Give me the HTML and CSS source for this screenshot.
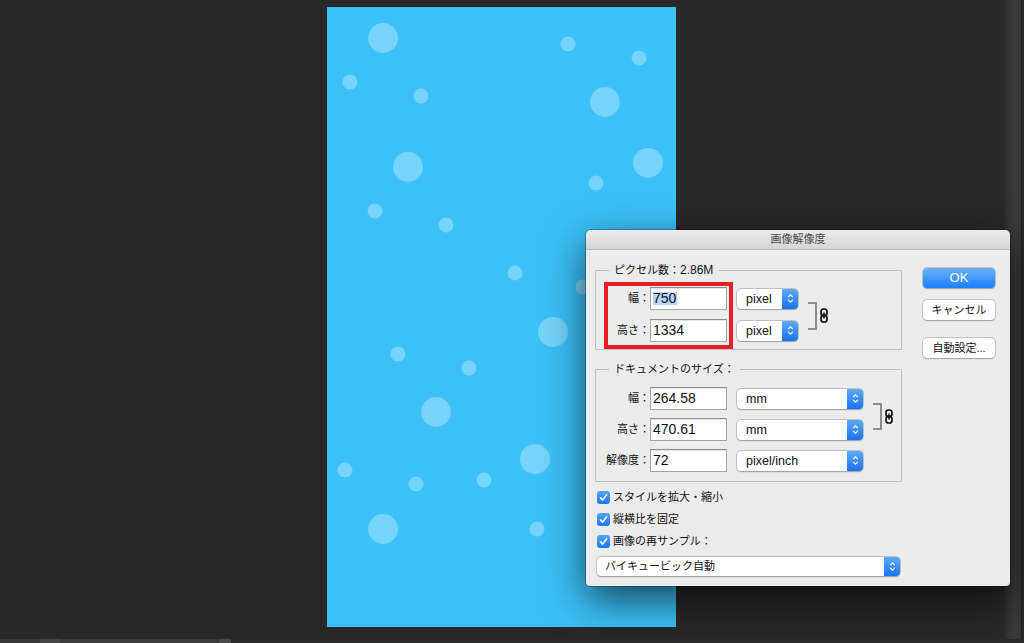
FILE: index.html
```html
<!DOCTYPE html>
<html lang="ja">
<head>
<meta charset="utf-8">
<title>画像解像度</title>
<link rel="stylesheet" href="styles.css">
</head>
<body>
<div class="app">
  <div class="main">
    <div class="workspace">
      <svg class="artboard" width="349" height="620" viewBox="327 7 349 620">
        <rect x="327" y="7" width="349" height="620" fill="#3bc1f7"/>
        <g fill="#ffffff" fill-opacity="0.3">
          <circle cx="383" cy="38" r="15"/>
          <circle cx="605" cy="102" r="15"/>
          <circle cx="408" cy="167" r="15"/>
          <circle cx="648" cy="163" r="15"/>
          <circle cx="553" cy="332" r="15"/>
          <circle cx="436" cy="412" r="15"/>
          <circle cx="535" cy="459" r="15"/>
          <circle cx="383" cy="529" r="15"/>
          <circle cx="350" cy="82" r="7.5"/>
          <circle cx="421" cy="96" r="7.5"/>
          <circle cx="568" cy="44" r="7.5"/>
          <circle cx="639" cy="58" r="7.5"/>
          <circle cx="596" cy="183" r="7.5"/>
          <circle cx="375" cy="211" r="7.5"/>
          <circle cx="446" cy="225" r="7.5"/>
          <circle cx="515" cy="273" r="7.5"/>
          <circle cx="583" cy="287" r="7.5"/>
          <circle cx="398" cy="354" r="7.5"/>
          <circle cx="469" cy="368" r="7.5"/>
          <circle cx="345" cy="470" r="7.5"/>
          <circle cx="416" cy="484" r="7.5"/>
          <circle cx="484" cy="480" r="7.5"/>
          <circle cx="537" cy="529" r="7.5"/>
        </g>
      </svg>
    </div>
    <div class="sidebar"></div>
  </div>
  <div class="statusbar">
    <div class="seg seg-a"></div>
    <div class="seg seg-b"></div>
    <div class="seg seg-c"></div>
    <div class="seg seg-d"></div>
    <div class="seg seg-e"></div>
  </div>

  <div class="dialog">
    <div class="titlebar">画像解像度</div>
    <div class="dlg-body">
      <div class="dlg-main">
        <div class="group">
          <div class="group-title">ピクセル数：<span class="latin">2.86M</span></div>
          <div class="px-body">
            <div class="highlight">
              <div class="field"><span class="lbl">幅：</span><div class="input"><span class="sel">750</span></div></div>
              <div class="field"><span class="lbl">高さ：</span><div class="input">1334</div></div>
            </div>
            <div class="unit-col">
              <div class="unit-row">
                <div class="select s1"><span class="select-text">pixel</span><span class="select-arrow"><svg width="7" height="11" viewBox="0 0 7 11"><path d="M1.2 4.2 L3.5 1.8 L5.8 4.2 M1.2 6.8 L3.5 9.2 L5.8 6.8" fill="none" stroke="#fff" stroke-width="1.2"/></svg></span></div>
              </div>
              <div class="unit-row">
                <div class="select s1"><span class="select-text">pixel</span><span class="select-arrow"><svg width="7" height="11" viewBox="0 0 7 11"><path d="M1.2 4.2 L3.5 1.8 L5.8 4.2 M1.2 6.8 L3.5 9.2 L5.8 6.8" fill="none" stroke="#fff" stroke-width="1.2"/></svg></span></div>
              </div>
            </div>
            <div class="link">
              <div class="bracket"></div>
              <svg class="chain" width="8" height="15" viewBox="0 0 8 15"><rect x="1" y="1" width="6" height="6.6" rx="2.6" fill="none" stroke="#111" stroke-width="1.7"/><rect x="1" y="7.4" width="6" height="6.6" rx="2.6" fill="none" stroke="#111" stroke-width="1.7"/><path d="M4 4.6 V10.4" stroke="#111" stroke-width="1.6"/></svg>
            </div>
          </div>
        </div>

        <div class="group group-doc">
          <div class="group-title">ドキュメントのサイズ：</div>
          <div class="doc-grid">
            <span class="lbl lbl-doc">幅：</span>
            <div class="input">264.58</div>
            <div class="select s2"><span class="select-text">mm</span><span class="select-arrow"><svg width="7" height="11" viewBox="0 0 7 11"><path d="M1.2 4.2 L3.5 1.8 L5.8 4.2 M1.2 6.8 L3.5 9.2 L5.8 6.8" fill="none" stroke="#fff" stroke-width="1.2"/></svg></span></div>
            <div class="link link-doc">
              <div class="bracket bracket-doc"></div>
              <svg class="chain" width="8" height="15" viewBox="0 0 8 15"><rect x="1" y="1" width="6" height="6.6" rx="2.6" fill="none" stroke="#111" stroke-width="1.7"/><rect x="1" y="7.4" width="6" height="6.6" rx="2.6" fill="none" stroke="#111" stroke-width="1.7"/><path d="M4 4.6 V10.4" stroke="#111" stroke-width="1.6"/></svg>
            </div>
            <span class="lbl lbl-doc">高さ：</span>
            <div class="input">470.61</div>
            <div class="select s2"><span class="select-text">mm</span><span class="select-arrow"><svg width="7" height="11" viewBox="0 0 7 11"><path d="M1.2 4.2 L3.5 1.8 L5.8 4.2 M1.2 6.8 L3.5 9.2 L5.8 6.8" fill="none" stroke="#fff" stroke-width="1.2"/></svg></span></div>
            <span class="lbl lbl-doc">解像度：</span>
            <div class="input">72</div>
            <div class="select s2"><span class="select-text">pixel/inch</span><span class="select-arrow"><svg width="7" height="11" viewBox="0 0 7 11"><path d="M1.2 4.2 L3.5 1.8 L5.8 4.2 M1.2 6.8 L3.5 9.2 L5.8 6.8" fill="none" stroke="#fff" stroke-width="1.2"/></svg></span></div>
          </div>
        </div>

        <div class="checks">
          <div class="check"><span class="cb"><svg width="13" height="13" viewBox="0 0 13 13"><path d="M3.4 6.8 L5.6 9.1 L9.7 3.8" fill="none" stroke="#fff" stroke-width="1.6" stroke-linecap="round" stroke-linejoin="round"/></svg></span><span>スタイルを拡大・縮小</span></div>
          <div class="check"><span class="cb"><svg width="13" height="13" viewBox="0 0 13 13"><path d="M3.4 6.8 L5.6 9.1 L9.7 3.8" fill="none" stroke="#fff" stroke-width="1.6" stroke-linecap="round" stroke-linejoin="round"/></svg></span><span>縦横比を固定</span></div>
          <div class="check"><span class="cb"><svg width="13" height="13" viewBox="0 0 13 13"><path d="M3.4 6.8 L5.6 9.1 L9.7 3.8" fill="none" stroke="#fff" stroke-width="1.6" stroke-linecap="round" stroke-linejoin="round"/></svg></span><span>画像の再サンプル：</span></div>
        </div>

        <div class="select sw"><span class="select-text jp">バイキュービック自動</span><span class="select-arrow"><svg width="7" height="11" viewBox="0 0 7 11"><path d="M1.2 4.2 L3.5 1.8 L5.8 4.2 M1.2 6.8 L3.5 9.2 L5.8 6.8" fill="none" stroke="#fff" stroke-width="1.2"/></svg></span></div>
      </div>

      <div class="dlg-buttons">
        <div class="btn btn-ok">OK</div>
        <div class="btn btn-cancel">キャンセル</div>
        <div class="btn btn-auto">自動設定...</div>
      </div>
    </div>
  </div>
</div>
</body>
</html>
```

FILE: styles.css
```css
* { box-sizing: border-box; }
html, body { margin: 0; padding: 0; }
body {
  background: #282828;
  font-family: "Liberation Sans", "Noto Sans CJK JP", sans-serif;
  width: 1024px;
  height: 643px;
  overflow: hidden;
}
.app {
  position: relative;
  width: 1024px;
  height: 643px;
  display: flex;
  flex-direction: column;
}
.main {
  display: flex;
  height: 639px;
}
.workspace {
  flex: 1;
  padding: 7px 0 0 327px;
}
.artboard { display: block; }
.sidebar {
  width: 20px;
  background: linear-gradient(to right, #2c2c2c 0, #353535 5px, #3a3a3a 11px, #363636 17px, #1f1f1f 17px, #1f1f1f 18px, #2b2b2b 18px);
}
.statusbar {
  height: 4px;
  display: flex;
}
.seg { height: 100%; }
.seg-a { width: 40px; background: #373737; }
.seg-b { width: 20px; background: #444444; }
.seg-c { width: 159px; background: #3b3b3b; }
.seg-d { width: 12px; background: #4a4a4a; }
.seg-e { flex: 1; background: #2b2b2b; }

/* dialog */
.dialog {
  position: absolute;
  left: 586px;
  top: 230px;
  width: 424px;
  height: 356px;
  background: #ececec;
  border-radius: 5px 5px 4px 4px;
  box-shadow: 0 0 0 1px rgba(0,0,0,0.25), 0 14px 40px rgba(0,0,0,0.65);
  overflow: hidden;
  color: #111;
  font-size: 11px;
}
.titlebar {
  height: 20px;
  text-align: center;
  font-size: 11px;
  line-height: 19px;
  color: #4a4a4a;
  background: linear-gradient(#ededed, #d5d5d5);
  border-bottom: 1px solid #b8b8b8;
}
.dlg-body {
  display: flex;
  padding: 0 15px 0 9px;
}
.dlg-main {
  width: 307px;
  padding-top: 20px;
}
.group {
  border: 1px solid #c0c0c0;
  border-radius: 1px;
}
.group-doc { margin-top: 19px; }
.group-title {
  width: fit-content;
  margin: -8px 0 0 13px;
  padding: 0 5px;
  background: #ececec;
  line-height: 15px;
  font-size: 11px;
  color: #111;
  white-space: nowrap;
}
.latin { font-size: 12px; }

.px-body {
  display: flex;
  align-items: flex-start;
  padding: 4px 0 0 8px;
}
.highlight {
  border: 4px solid #ea1d25;
  padding: 1px 2px 3px 0;
  display: flex;
  flex-direction: column;
  gap: 9px;
}
.field {
  display: flex;
  align-items: center;
  height: 23px;
}
.lbl {
  width: 42px;
  text-align: right;
  font-size: 11px;
  line-height: 23px;
  white-space: nowrap;
  color: #111;
}
.lbl-doc { width: 54px; grid-column: 1; }
.input {
  width: 77px;
  height: 23px;
  background: #fff;
  border: 1px solid #a4a4a4;
  border-top-color: #8f8f8f;
  box-shadow: inset 0 1px 0 #e4e4e4;
  padding-left: 2px;
  font-size: 14px;
  line-height: 21px;
  color: #111;
  white-space: nowrap;
}
.sel {
  display: inline-block;
  background: #b3d7ff;
  line-height: 13px;
  padding: 0 1px 0 0;
  vertical-align: middle;
  margin-top: -2px;
}
.unit-col {
  margin-left: 4px;
  padding-top: 5px;
  display: flex;
  flex-direction: column;
  gap: 9px;
}
.unit-row {
  height: 23px;
  display: flex;
  align-items: center;
}
.select {
  height: 20px;
  display: flex;
  background: #fff;
  border-radius: 4px;
  box-shadow: 0 0 0 0.5px rgba(0,0,0,0.3), 0 0.5px 1.5px rgba(0,0,0,0.22);
}
.s1 { width: 61px; }
.s2 { width: 126px; margin-left: 10px; align-self: center; }
.sw { width: 303px; height: 19px; margin: 9px 0 0 2px; }
.select-text {
  flex: 1;
  padding-left: 9px;
  font-size: 12.5px;
  line-height: 20px;
  color: #111;
  white-space: nowrap;
}
.sw .select-text {
  padding-left: 8px;
  font-size: 11px;
  line-height: 19px;
}
.select-arrow {
  width: 16px;
  border-radius: 0 4px 4px 0;
  background: linear-gradient(#5eabfd, #1b72f2);
  display: flex;
  align-items: center;
  justify-content: center;
}
.select-arrow svg { display: block; }

.link {
  display: flex;
  align-items: center;
  gap: 3px;
  margin-left: 10px;
  align-self: center;
}
.bracket {
  width: 9px;
  height: 28px;
  border: 2px solid #8c8c8c;
  border-left: 0;
}
.chain { display: block; }

.doc-grid {
  display: grid;
  grid-template-columns: 54px 77px 136px auto;
  grid-auto-rows: 23px;
  row-gap: 8px;
  padding: 10px 0 9px 0;
}
.link-doc {
  grid-column: 4;
  grid-row: 1 / span 2;
  margin-top: 5px;
}
.bracket-doc { height: 27px; }

.checks {
  margin-top: 9px;
  padding-left: 2px;
  display: flex;
  flex-direction: column;
  gap: 9px;
}
.check {
  display: flex;
  align-items: center;
  height: 13px;
  gap: 3px;
  font-size: 11px;
  line-height: 13px;
  color: #111;
  white-space: nowrap;
}
.cb {
  width: 13px;
  height: 13px;
  border-radius: 3px;
  background: linear-gradient(#52a5fc, #1c76f2);
  display: block;
}
.cb svg { display: block; }

.dlg-buttons {
  margin-left: 21px;
  padding-top: 18px;
  display: flex;
  flex-direction: column;
  width: 72px;
}
.btn {
  height: 20px;
  border-radius: 4px;
  background: #fff;
  box-shadow: 0 0 0 0.5px rgba(0,0,0,0.3), 0 0.5px 1.5px rgba(0,0,0,0.2);
  font-size: 11px;
  line-height: 20px;
  text-align: center;
  color: #111;
  white-space: nowrap;
}
.btn-ok {
  background: linear-gradient(#6bb3fb, #1a7ffb);
  color: #fff;
  font-size: 13px;
}
.btn-cancel { margin-top: 12px; }
.btn-auto { margin-top: 18px; }
```
